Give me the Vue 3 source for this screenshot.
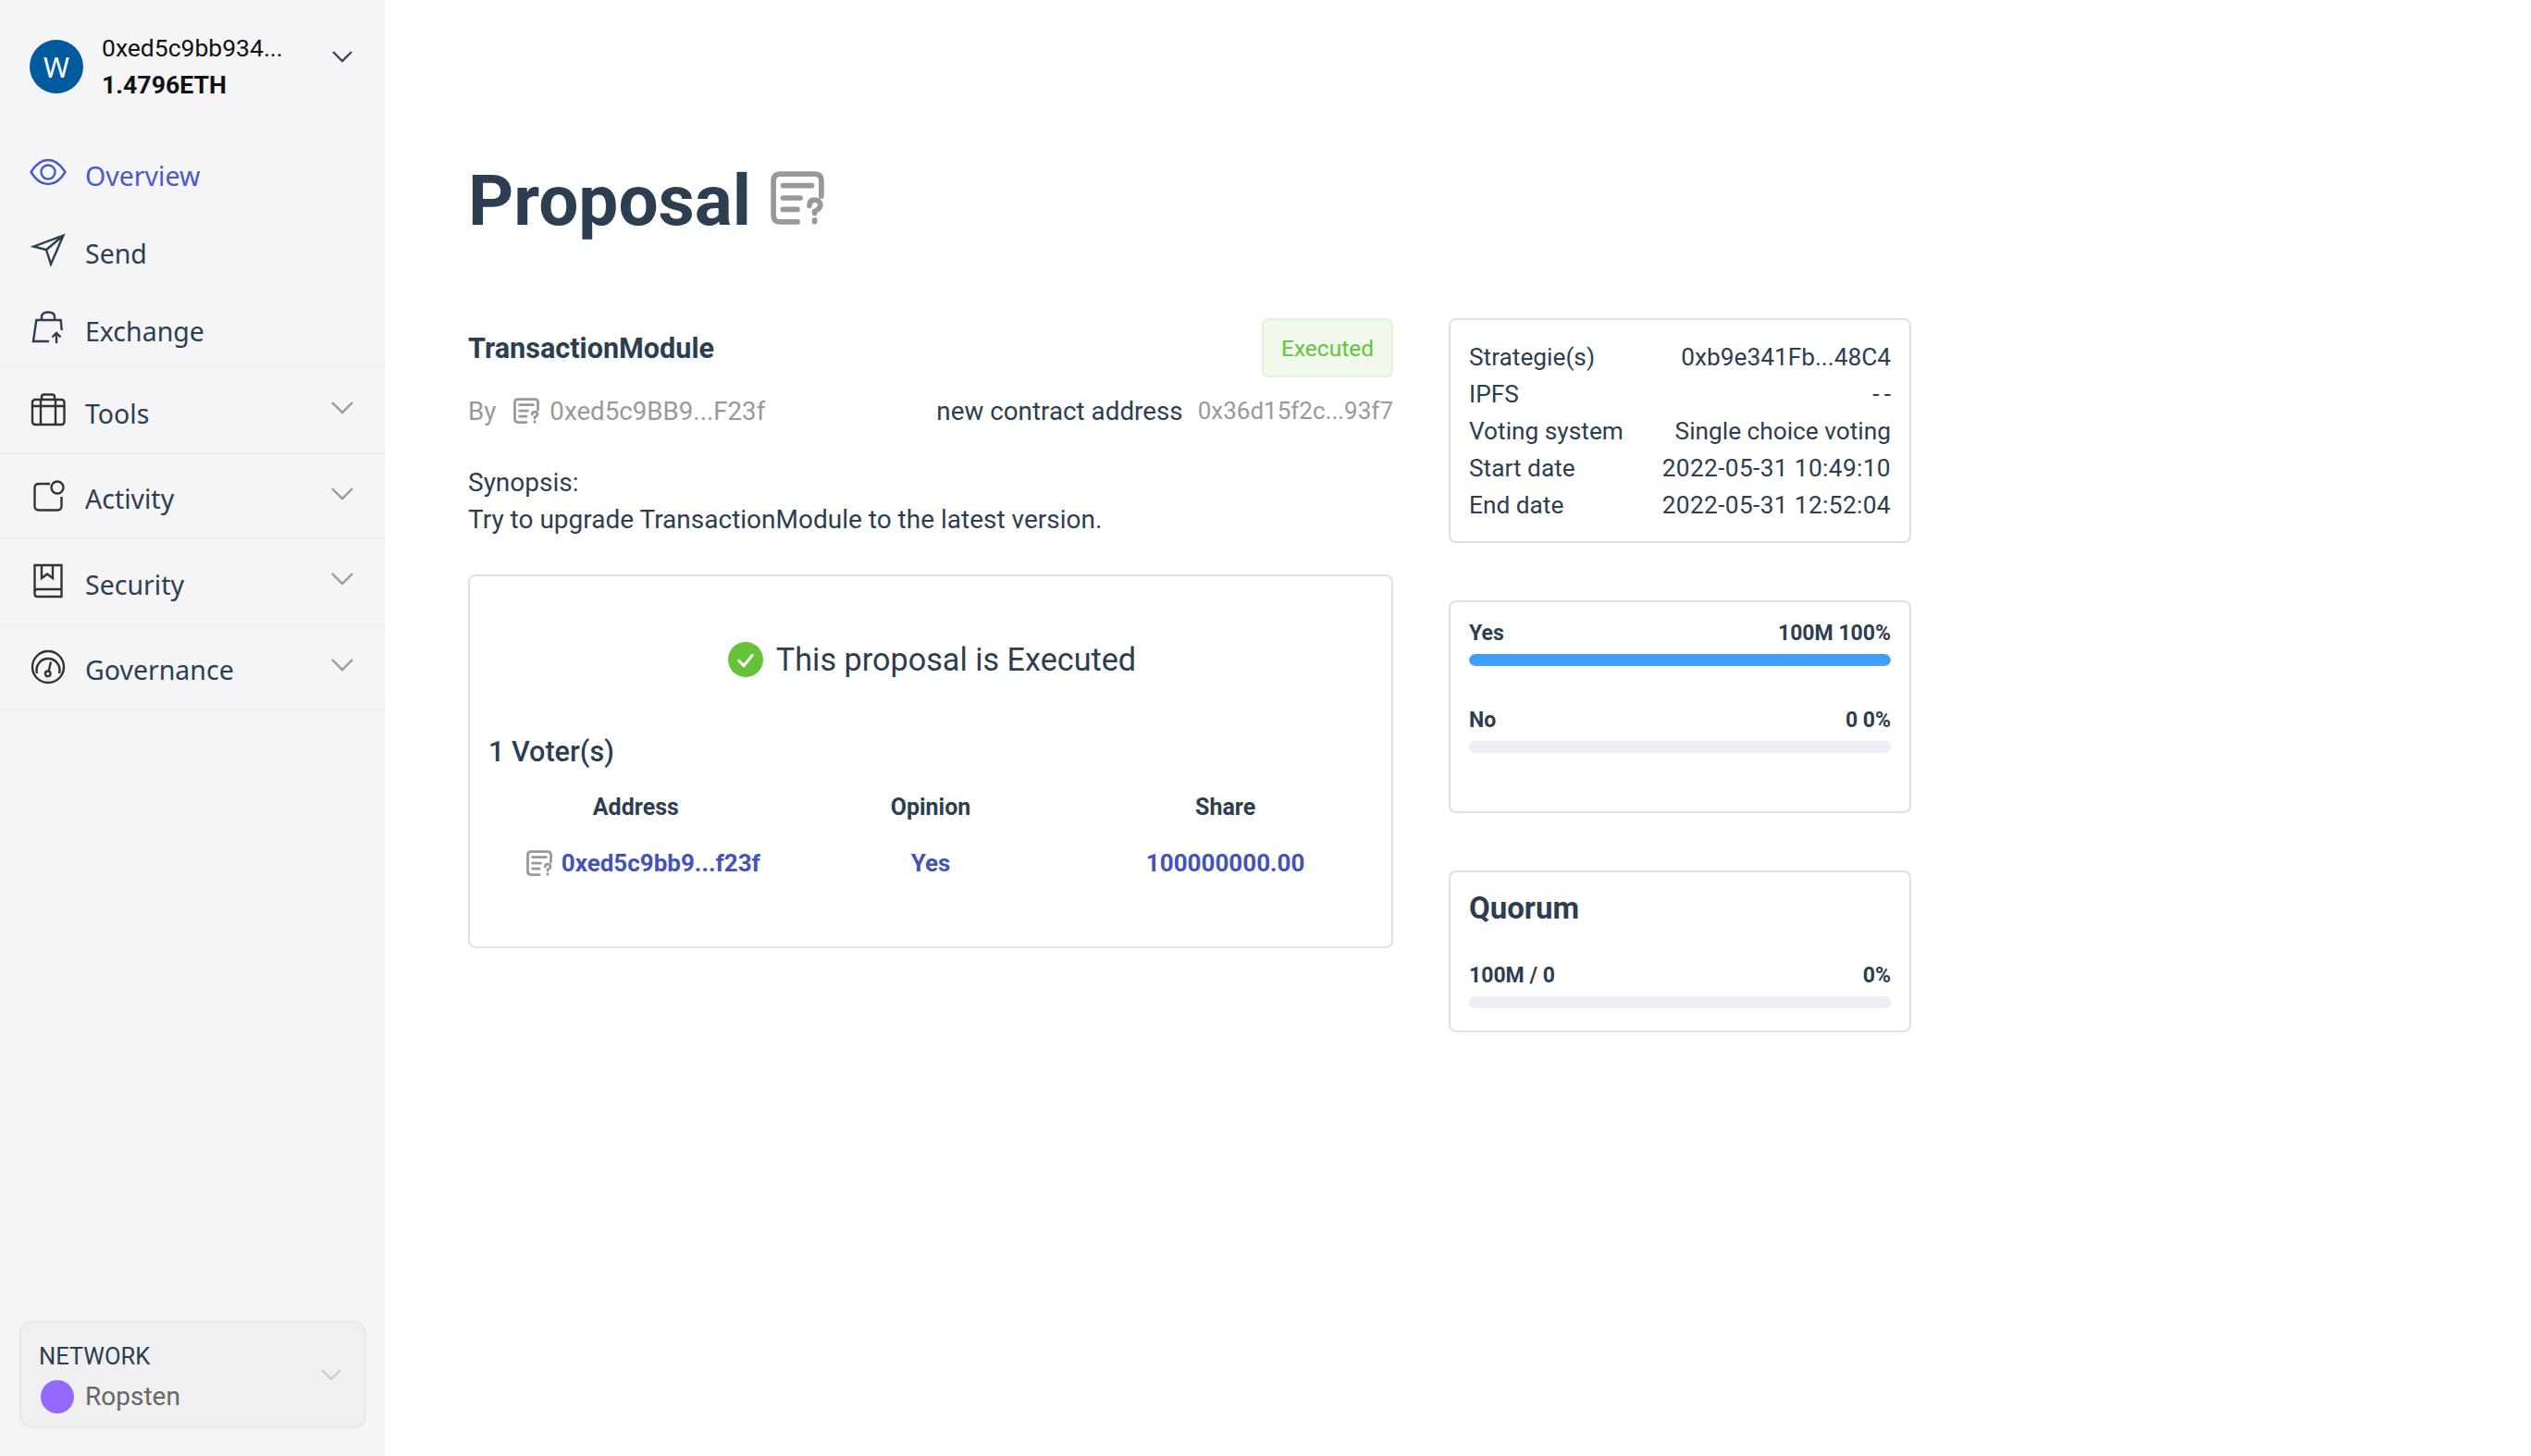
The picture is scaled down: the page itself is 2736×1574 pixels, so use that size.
<template>
  <div class="page">
    <aside class="side">
      <div class="account">
        <div class="avatar">W</div>
        <div class="acc-text">
          <div class="acc-addr">0xed5c9bb934...</div>
          <div class="acc-bal">1.4796ETH</div>
        </div>
        <svg class="acc-chev" width="24" height="14" viewBox="0 0 24 14"><path d="M2 2l10 10L22 2" /></svg>
      </div>

      <nav class="top-nav">
        <a class="item active">
          <svg class="ic" viewBox="0 0 40 40"><path d="M1.5 20C7 11 13 7 20 7s13 4 18.500 13C33 29 27 33 20 33S7 29 1.500 20z" /><circle cx="20" cy="20" r="7.500" /></svg>
          <span>Overview</span>
        </a>
        <a class="item">
          <svg class="ic" viewBox="0 0 40 40"><path d="M36.500 4.500L4.500 16.500 18 20l5 15.500zM18 20L36.500 4.500" /></svg>
          <span>Send</span>
        </a>
        <a class="item">
          <svg class="ic" viewBox="0 0 40 40"><path d="M21 34H4l3.300-23h26.400l1 11M13 11V7.500C13 3.500 17 2.500 20 2.500s7 1 7 5V11M29 36V25M24.500 29.500L29 25l4.500 4.500" /></svg>
          <span>Exchange</span>
        </a>
      </nav>

      <div class="group">
        <svg class="ic dark" viewBox="0 0 40 40"><rect x="3" y="9" width="34.500" height="27" rx="3" /><path d="M13 9V6q0-2.500 2.500-2.500h9Q27 3.500 27 6v3M12 9v27M28 9v27M3 16h34.500" /></svg>
        <span>Tools</span>
        <svg class="chev" width="26" height="16" viewBox="0 0 26 16"><path d="M2 2l11 11L24 2" /></svg>
      </div>
      <div class="group">
        <svg class="ic dark" viewBox="0 0 40 40"><path d="M22 7H10q-4.500 0-4.500 4.500V31q0 4.500 4.500 4.500h20q4.500 0 4.500-4.500V21" /><circle cx="30" cy="11" r="6.500" /></svg>
        <span>Activity</span>
        <svg class="chev" width="26" height="16" viewBox="0 0 26 16"><path d="M2 2l11 11L24 2" /></svg>
      </div>
      <div class="group">
        <svg class="ic dark" viewBox="0 0 40 40"><path d="M5.500 3h29v34H8.500q-3 0-3-3zM5.500 32q0-3 3-3h26M13 3.500V17l6-4.500 6 4.500V3.500" /></svg>
        <span>Security</span>
        <svg class="chev" width="26" height="16" viewBox="0 0 26 16"><path d="M2 2l11 11L24 2" /></svg>
      </div>
      <div class="group">
        <svg class="ic dark" viewBox="0 0 40 40"><circle cx="20" cy="20" r="17" /><path d="M8 27A12.500 12.500 0 1 1 32 27M20.500 25L23 14.500" /><circle cx="19.700" cy="27.300" r="2.800" /></svg>
        <span>Governance</span>
        <svg class="chev" width="26" height="16" viewBox="0 0 26 16"><path d="M2 2l11 11L24 2" /></svg>
      </div>

      <div class="network">
        <div class="net-text">
          <div class="net-label">NETWORK</div>
          <div class="net-value"><i class="net-dot"></i>Ropsten</div>
        </div>
        <svg class="net-chev" width="24" height="14" viewBox="0 0 24 14"><path d="M2 2l10 10L22 2" /></svg>
      </div>
    </aside>

    <main class="main">
      <h1 class="title">
        Proposal
        <svg class="doc" width="58" height="58" viewBox="0 0 56 56"><path d="M28 53H10q-7 0-7-7V10q0-7 7-7h36q7 0 7 7v16M13 15h30M13 28h18M13 40h15M40.500 36q0-6 5.500-6t6 5.500q0 3.500-6 6.500v2M46 51v1.500" /></svg>
      </h1>

      <div class="content">
        <section class="left">
          <div class="head-row">
            <h2 class="module">TransactionModule</h2>
            <span class="tag">Executed</span>
          </div>
          <div class="by-row">
            <span class="grey">By</span>
            <svg class="doc-sm by-ic" width="28" height="28" viewBox="0 0 56 56"><path d="M28 53H10q-7 0-7-7V10q0-7 7-7h36q7 0 7 7v16M13 15h30M13 28h18M13 40h15M40.500 36q0-6 5.500-6t6 5.500q0 3.500-6 6.500v2M46 51v1.500" /></svg>
            <span class="grey">0xed5c9BB9...F23f</span>
            <span class="contract">new contract address</span>
            <span class="grey small">0x36d15f2c...93f7</span>
          </div>
          <p class="synopsis">Synopsis:<br />Try to upgrade TransactionModule to the latest version.</p>

          <div class="card vote-box">
            <div class="state">
              <svg width="38" height="38" viewBox="0 0 38 38"><circle cx="19" cy="19" r="19" fill="#67c23a" /><path d="M11 19.500l6 6 10-12" fill="none" stroke="#fff" stroke-width="3" /></svg>
              <span>This proposal is Executed</span>
            </div>
            <h3 class="voters">1 Voter(s)</h3>
            <div class="v-table">
              <div class="th" v-for="h in ['Address', 'Opinion', 'Share']" :key="h">{{ h }}</div>
              <div class="td addr">
                <svg class="doc-sm" width="28" height="28" viewBox="0 0 56 56"><path d="M28 53H10q-7 0-7-7V10q0-7 7-7h36q7 0 7 7v16M13 15h30M13 28h18M13 40h15M40.500 36q0-6 5.500-6t6 5.500q0 3.500-6 6.500v2M46 51v1.500" /></svg>
                0xed5c9bb9...f23f
              </div>
              <div class="td">Yes</div>
              <div class="td">100000000.00</div>
            </div>
          </div>
        </section>

        <section class="right">
          <div class="card info">
            <div class="info-row" v-for="r in infoRows" :key="r[0]">
              <span>{{ r[0] }}</span><span :class="{ date: r[2] }">{{ r[1] }}</span>
            </div>
          </div>

          <div class="card results">
            <div class="res-item" v-for="r in results" :key="r.label">
              <div class="res-head"><span>{{ r.label }}</span><span>{{ r.value }}</span></div>
              <div class="track"><div class="fill" :style="{ width: r.pct + '%' }"></div></div>
            </div>
          </div>

          <div class="card quorum">
            <h4>Quorum</h4>
            <div class="res-head"><span>100M / 0</span><span>0%</span></div>
            <div class="track"></div>
          </div>
        </section>
      </div>
    </main>
  </div>
</template>

<script setup>
const infoRows = [
  ["Strategie(s)", "0xb9e341Fb...48C4"],
  ["IPFS", "-\u2009-"],
  ["Voting system", "Single choice voting"],
  ["Start date", "2022-05-31 10:49:10", true],
  ["End date", "2022-05-31 12:52:04", true],
];

const results = [
  { label: "Yes", value: "100M 100%", pct: 100 },
  { label: "No", value: "0 0%", pct: 0 },
];
</script>

<style>
html, body { margin: 0; background: #fff; }
</style>

<style scoped>
.page { display: flex; width: 2736px; height: 1574px; overflow: hidden; font-family: Roboto, sans-serif; color: #2c3e50; background: #fff; }

.side { width: 416px; flex: none; display: flex; flex-direction: column; background: #f5f5f8; box-sizing: border-box; padding-bottom: 30px; }
.account { height: 144px; display: flex; align-items: center; padding: 0 34px 0 32px; box-sizing: border-box; }
.avatar { width: 58px; height: 58px; border-radius: 50%; background: #005a9e; color: #fff; display: flex; align-items: center; justify-content: center; font-size: 30px; font-family: "Noto Sans", sans-serif; flex: none; }
.acc-text { margin-left: 20px; flex: 1; color: #111; line-height: 40px; }
.acc-addr { font-size: 26.500px; }
.acc-bal { font-size: 26.700px; font-weight: 700; }
.acc-chev { margin-top: -23px; }
.acc-chev path { fill: none; stroke: #34495e; stroke-width: 2.4; }

.top-nav { height: 254px; border-bottom: 2px solid #eeeef1; box-sizing: border-box; }
.item { display: flex; align-items: center; height: 84.250px; padding-left: 32px; font-family: "Noto Sans", sans-serif; font-size: 28.500px; color: #2c3e50; }
.item span, .group > span { margin-left: 20px; padding-top: 7px; }
.item.active { color: #4a5ac4; }
.ic { width: 40px; height: 40px; flex: none; fill: none; stroke: currentColor; stroke-width: 2.4; }
.ic.dark { stroke: #333; }

.group { display: flex; align-items: center; height: 92.500px; padding: 0 33px 0 32px; border-bottom: 2px solid #eeeef1; box-sizing: border-box; font-family: "Noto Sans", sans-serif; font-size: 28.500px; color: #2c3e50; }
.group > span { flex: 1; }
.chev { margin-top: -4px; }
.chev path { fill: none; stroke: #999; stroke-width: 2.4; }

.network { margin: auto 20px 0 21px; height: 116px; display: flex; align-items: center; justify-content: space-between; padding: 0 24px 0 19px; background: #f0f0f3; border: 2px solid #e8e8ec; border-radius: 14px; box-sizing: border-box; }
.net-text { margin-top: 4px; }
.net-label { font-size: 25.500px; line-height: 40px; }
.net-value { display: flex; align-items: center; margin-top: 4px; color: #666; font-size: 28px; line-height: 40px; }
.net-dot { width: 36px; height: 36px; border-radius: 50%; background: #9469ff; margin-left: 2px; margin-right: 12px; }
.net-chev path { fill: none; stroke: #c5cad3; stroke-width: 2.2; }

.main { flex: 1; padding: 174px 0 0 90px; }
.title { margin: 0; display: flex; align-items: center; gap: 21px; font-size: 76.500px; line-height: 86px; font-weight: 700; }
.doc { margin-top: -6px; }
.content { display: flex; gap: 60px; margin-top: 84px; }

.left { width: 1000px; flex: none; }
.head-row { display: flex; align-items: center; justify-content: space-between; height: 64px; }
.module { margin: 0; font-size: 30.600px; font-weight: 700; }
.tag { display: flex; align-items: center; justify-content: center; width: 142px; height: 64px; box-sizing: border-box; font-size: 24.500px; color: #67c23a; background: #f0f9eb; border: 2px solid #e1f3d8; border-radius: 7px; }
.by-row { display: flex; align-items: center; gap: 14px; margin-top: 16px; height: 40px; font-size: 27.700px; }
.by-ic { margin-left: 5px; margin-right: -3px; }
.grey { color: #999; }
.small { font-size: 26px; margin-left: 2px; }
.doc-sm { flex: none; }
.doc path, .doc-sm path { fill: none; stroke: #999; stroke-width: 5.500; stroke-linecap: round; }
.contract { margin-left: auto; font-size: 27.800px; }
.synopsis { margin: 38px 0 0; font-size: 28px; line-height: 40px; }

.card { border: 2px solid #e0e0e0; border-radius: 8px; box-sizing: border-box; background: #fff; }
.vote-box { height: 404px; margin-top: 39px; padding: 0 20px; }
.state { display: flex; align-items: center; justify-content: center; gap: 14px; margin-top: 70px; padding-left: 3px; font-size: 34.200px; line-height: 40px; }
.voters { margin: 60px 0 0; font-size: 30.600px; font-weight: 500; line-height: 40px; }
.v-table { display: grid; grid-template-columns: repeat(3, 1fr); margin-top: 20px; }
.th { text-align: center; font-size: 25px; font-weight: 700; line-height: 40px; }
.td { display: flex; align-items: center; justify-content: center; gap: 10px; margin-top: 20px; font-size: 26px; font-weight: 700; line-height: 40px; color: #4453b8; }
.td.addr { padding-left: 16px; }

.right { width: 500px; flex: none; display: flex; flex-direction: column; }
.info { height: 243px; padding: 20px; font-size: 26.250px; line-height: 40px; }
.info-row { display: flex; justify-content: space-between; }
.date { letter-spacing: .37px; }
.results { height: 230px; margin-top: 62px; padding: 14px 20px; }
.res-item + .res-item { margin-top: 39px; }
.res-head { display: flex; justify-content: space-between; font-size: 23px; font-weight: 700; line-height: 40px; }
.track { height: 13px; border-radius: 7px; background: #ebeef5; overflow: hidden; margin-top: 2px; }
.fill { height: 100%; background: #409eff; border-radius: 7px; }
.quorum { height: 175px; margin-top: 62px; padding: 19px 20px; }
.quorum h4 { margin: 0 0 33px; font-size: 33px; font-weight: 700; line-height: 40px; }
</style>
